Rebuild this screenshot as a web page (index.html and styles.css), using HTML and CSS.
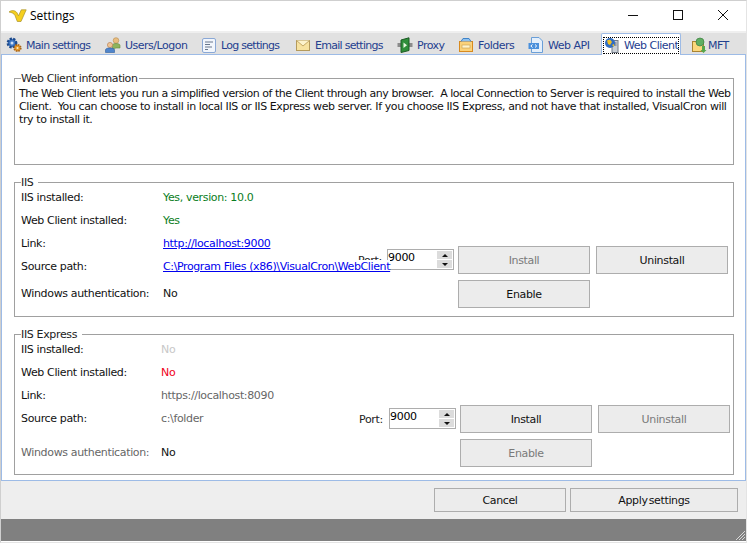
FILE: index.html
```html
<!DOCTYPE html>
<html lang="en">
<head>
<meta charset="utf-8">
<title>Settings</title>
<link rel="stylesheet" href="styles.css">
</head>
<body>
<div class="window">
  <header class="titlebar">
    <svg class="logo" width="18" height="14" viewBox="0 0 18 14"><path d="M0 3C3 .8 6 1.200 8 3.800L9.500 6.800 12.300 .8H17.200L12 12.500H8.300L6 6.500C5 4.500 3 3.500 0 3Z" fill="#f5cf1e" stroke="#a8912c" stroke-width=".7"/></svg>
    <span class="title">Settings</span>
    <div class="winctl">
      <svg width="12" height="12" viewBox="0 0 12 12"><path d="M1 6.500H11" stroke="#111"/></svg>
      <svg width="12" height="12" viewBox="0 0 12 12"><rect x="1.500" y="1.500" width="9" height="9" fill="none" stroke="#111"/></svg>
      <svg width="12" height="12" viewBox="0 0 12 12"><path d="M1 1L11 11M11 1L1 11" stroke="#111" fill="none"/></svg>
    </div>
  </header>

  <nav class="tabs">
    <div class="tab tight"><svg class="ico" viewBox="0 0 16 16"><circle cx="6" cy="6" r="4.200" fill="#3f78c6" stroke="#1d4a8c" stroke-width="2.400" stroke-dasharray="2.200 1.200"/><circle cx="6" cy="6" r="1.500" fill="#cfe0f5"/><circle cx="11.500" cy="11" r="3.200" fill="#e79a2a" stroke="#a8641a" stroke-width="1.800" stroke-dasharray="1.500 1"/><circle cx="11.500" cy="11" r="1" fill="#fde9c0"/></svg><span>Main settings</span></div>
    <div class="tab"><svg class="ico" viewBox="0 0 16 16"><circle cx="11" cy="3.500" r="2.800" fill="#e8bd80" stroke="#b98b4c" stroke-width=".6"/><path d="M7.500 12V8.500C7.500 7 9 6.500 11 6.500S15 7 15 8.500V11H11Z" fill="#8fb45c" stroke="#66883b" stroke-width=".6"/><circle cx="5" cy="8" r="2.600" fill="#eec596" stroke="#b5794a" stroke-width=".6"/><path d="M.5 15.500V13C.5 11.500 2.500 11 5 11S9.500 11.500 9.500 13V15.500Z" fill="#4f85cc" stroke="#2d5c9c" stroke-width=".6"/></svg><span>Users/Logon</span></div>
    <div class="tab tight"><svg class="ico" viewBox="0 0 16 16"><rect x="1.500" y="1.500" width="13" height="14" rx="1.500" fill="#f2f6fc" stroke="#8aa8d6"/><path d="M4 5H12M4 7.500H9M4 10H11M4 12.500H7" stroke="#68778c"/></svg><span>Log settings</span></div>
    <div class="tab tight"><svg class="ico" viewBox="0 0 16 16"><rect x="1.500" y="3.500" width="13" height="10" fill="#f7e2a0" stroke="#b49a5c"/><path d="M1.500 3.500L8 9 14.500 3.500" fill="#fdf3cd" stroke="#c4a866"/></svg><span>Email settings</span></div>
    <div class="tab"><svg class="ico" viewBox="0 0 16 16"><rect x=".5" y="6" width="3.500" height="4" fill="#8b8b8b"/><rect x="12" y="6" width="3.500" height="4" fill="#8b8b8b"/><path d="M4 3L12 .8V13.500L4 15.500Z" fill="#2f8f3a" stroke="#1c5a24"/><path d="M6.500 5.500L10 8.200 6.500 11Z" fill="#e8f8e0"/></svg><span>Proxy</span></div>
    <div class="tab"><svg class="ico" viewBox="0 0 16 16"><rect x="1.500" y="4.500" width="13" height="10" fill="#fbd27a" stroke="#d88a1e"/><path d="M3 4.500L5 1.500H11L13 4.500" fill="#8fc1ee" stroke="#3f83c8"/><rect x="4" y="8" width="8" height="3" fill="#fff4cc" stroke="#c79b4a" stroke-width=".6"/></svg><span>Folders</span></div>
    <div class="tab"><svg class="ico" viewBox="0 0 16 16"><path d="M3.500 .5H11L14.500 4V15.500H3.500Z" fill="#e4effb" stroke="#6a9fd8"/><path d="M.5 6H11V12H.5Z" fill="#4a90dc"/><path d="M4.500 7.500L2.800 9 4.500 10.500M7 7.500L8.700 9 7 10.500" stroke="#fff" fill="none"/></svg><span>Web API</span></div>
    <div class="tab active"><div class="focus"><svg class="ico" viewBox="0 0 16 16"><rect x="8" y="3.500" width="6" height="12" fill="#c8ced6" stroke="#727a85"/><path d="M9.500 6H12.500M9.500 8H12.500" stroke="#5a6470"/><circle cx="6" cy="6" r="5" fill="#2f6cc2"/><path d="M3 3.500L6 2.500 8 5 6 8 4 7ZM8 8L10 7 10 10Z" fill="#f0c024"/></svg><span>Web Client</span></div></div>
    <div class="tab near"><svg class="ico" viewBox="0 0 16 16"><rect x="1.500" y="4.500" width="11" height="10" fill="#fbd77c" stroke="#a98432"/><circle cx="9" cy="5" r="4" fill="#5fae62" stroke="#3d7f42" stroke-width=".7"/><path d="M11 9H14V13H15.500L12.500 16 9.500 13H11Z" fill="#56a64c"/></svg><span>MFT</span></div>
  </nav>

  <main class="pane">
    <fieldset class="group group-info">
      <legend>Web Client information</legend>
      <p class="intro"><span class="line-a">The Web Client lets you run a simplified version of the Client through any browser.&nbsp; A local Connection to Server is required to install the Web</span><span class="line-b">Client.&nbsp; You can choose to install in local IIS or IIS Express web server. If you choose IIS Express, and not have that installed, VisualCron will</span><span class="line-b">try to install it.</span></p>
    </fieldset>

    <fieldset class="group group-iis">
      <legend>IIS</legend>
      <div class="group-body">
        <dl class="facts">
          <dt>IIS installed:</dt><dd class="ok">Yes, version: 10.0</dd>
          <dt>Web Client installed:</dt><dd class="ok">Yes</dd>
          <dt>Link:</dt><dd><a href="#">http://localhost:9000</a></dd>
          <dt>Source path:</dt><dd><a class="over" href="#">C:\Program Files (x86)\VisualCron\WebClient</a></dd>
          <dt class="last">Windows authentication:</dt><dd class="last">No</dd>
        </dl>
        <div class="actions">
          <label class="port">Port:</label>
          <div class="spin"><span>9000</span><div class="arrows"><i class="up"></i><i class="down"></i></div></div>
          <button class="btn" disabled>Install</button>
          <button class="btn">Uninstall</button>
          <button class="btn second">Enable</button>
        </div>
      </div>
    </fieldset>

    <fieldset class="group group-express">
      <legend>IIS Express</legend>
      <div class="group-body">
        <dl class="facts">
          <dt>IIS installed:</dt><dd class="faint">No</dd>
          <dt>Web Client installed:</dt><dd class="bad">No</dd>
          <dt>Link:</dt><dd class="muted">https://localhost:8090</dd>
          <dt>Source path:</dt><dd class="muted">c:\folder</dd>
          <dt class="last muted">Windows authentication:</dt><dd class="last">No</dd>
        </dl>
        <div class="actions">
          <label class="port">Port:</label>
          <div class="spin"><span>9000</span><div class="arrows"><i class="up"></i><i class="down"></i></div></div>
          <button class="btn">Install</button>
          <button class="btn" disabled>Uninstall</button>
          <button class="btn second" disabled>Enable</button>
        </div>
      </div>
    </fieldset>
  </main>

  <footer class="footer">
    <button class="btn cancel">Cancel</button>
    <button class="btn apply">Apply settings</button>
  </footer>
  <div class="status"><svg class="grip" width="12" height="12" viewBox="0 0 12 12"><path d="M11 2L2 11M11 5L5 11M11 8L8 11" stroke="#d8d8d8" stroke-width="1"/></svg></div>
</div>
</body>
</html>
```

FILE: styles.css
```css
* { box-sizing: border-box; }
html, body { margin: 0; padding: 0; background: #fff; }
body {
  width: 747px;
  height: 543px;
  overflow: hidden;
  font-family: "DejaVu Sans", sans-serif;
  font-size: 11px;
  line-height: 13px;
  letter-spacing: -0.35px;
  color: #111;
}
.window {
  width: 747px;
  height: 543px;
  display: flex;
  flex-direction: column;
  border: 1px solid #cfcfcf;
  border-bottom-color: #e4e4e4;
  border-right-color: #e4e4e4;
  position: relative;
}
.titlebar {
  height: 30px;
  flex: none;
  display: flex;
  align-items: center;
  padding: 0 0 1px 8px;
  background: #fff;
}
.logo { flex: none; }
.title {
  margin-left: 3px;
  font-family: "Open Sans", sans-serif;
  font-size: 12px;
  letter-spacing: 0;
  color: #000;
}
.winctl {
  margin-left: auto;
  margin-right: 17px;
  display: flex;
  gap: 33px;
  padding-bottom: 2px;
}
.tabs {
  height: 23px;
  flex: none;
  display: grid;
  grid-template-columns: 99px 96px 94px 102px 61px 70px 73px 90px 44px;
  padding-left: 5px;
  background: linear-gradient(#efefef 0, #efefef 2px, #e1e1e1 2px);
  position: relative;
  z-index: 1;
}
.tab {
  display: flex;
  align-items: center;
  gap: 4px;
  color: #24408f;
  white-space: nowrap;
  padding-top: 5px;
  letter-spacing: -0.5px;
}
.tight { letter-spacing: -0.72px; }
.near { gap: 1px; }
.ico { width: 16px; height: 16px; flex: none; }
.tab.active {
  margin: 2px 10px -1px 0;
  padding: 2px 1px 1px 1px;
  background: #fff;
  border: 1px solid #9dbbe6;
  border-bottom: 0;
  border-radius: 2px 2px 0 0;
}
.focus {
  display: flex;
  align-items: center;
  gap: 4px;
  width: 100%;
  height: 17px;
  border: 1px dotted #000;
}
.pane {
  height: 427px;
  flex: none;
  margin: 0;
  padding: 17px 12px 0 12px;
  background: #fff;
  border: 1px solid #9dbbe6;
  display: flex;
  flex-direction: column;
}
.group {
  margin: 0;
  width: 720px;
  min-width: 0;
  padding: 0 6px;
  border: 1px solid #a0a0a0;
  flex: none;
}
.group legend {
  padding: 0 5px 0 0;
  margin-left: 0;
  line-height: 13px;
  color: #222;
}
.group-info { height: 93px; padding-left: 4px; }
.group-info legend { margin-left: 2px; padding-right: 2px; letter-spacing: -0.45px; }
.group-iis { height: 141px; margin-top: 11px; }
.group-express { height: 147px; margin-top: 11px; }
.intro {
  margin: 2px 0 0;
  white-space: nowrap;
}
.line-a, .line-b { display: block; }
.line-a { letter-spacing: -0.475px; }
.line-b { letter-spacing: -0.4px; }
.group-body {
  display: grid;
  grid-template-columns: 337px auto;
}
.facts {
  margin: 2px 0 0;
  display: grid;
  grid-template-columns: 142px 1fr;
  grid-auto-rows: 13px;
  row-gap: 10px;
  white-space: nowrap;
}
.group-express .facts { grid-template-columns: 140px 1fr; }
.facts dd { margin: 0; }
.facts .last { margin-top: 4px; }
.group-express .facts .last { margin-top: 11px; }
.ok { color: #0a7d22; }
.bad { color: #f00020; }
.faint { color: #c8c8c8; }
.muted { color: #666; }
a { color: #0000ee; text-decoration: underline; }
.over {
  position: relative;
  z-index: 2;
  display: inline-block;
  background: #fff;
  letter-spacing: -0.38px;
}
.actions {
  display: grid;
  grid-template-columns: 29px 67px 136px 138px;
  grid-template-rows: 28px 28px;
  row-gap: 6px;
  margin-top: 57px;
  align-items: start;
}
.group-express .actions { margin-left: 2px; margin-top: 64px; }
.group-express .port { margin-left: -1px; }
.port { padding-top: 8px; color: #222; }
.spin {
  height: 21px;
  margin-top: 3px;
  border: 1px solid #adadad;
  background: #fff;
  display: flex;
  justify-content: space-between;
  line-height: 15px;
  color: #000;
  letter-spacing: -0.3px;
}
.arrows {
  width: 15px;
  margin: 1px 1px 1px 0;
  display: flex;
  flex-direction: column;
  gap: 1px;
  background: #fff;
}
.arrows i {
  flex: 1;
  background: #dcdcdc;
  display: flex;
  align-items: center;
  justify-content: center;
}
.arrows i::before {
  content: "";
  width: 0;
  height: 0;
  border-left: 3px solid transparent;
  border-right: 3px solid transparent;
}
.arrows .up::before { border-bottom: 3px solid #111; }
.arrows .down::before { border-top: 3px solid #111; }
.btn {
  width: 132px;
  height: 28px;
  padding: 0;
  margin-left: 4px;
  font: inherit;
  letter-spacing: inherit;
  color: #111;
  background: #ececec;
  border: 1px solid #adadad;
  border-radius: 0;
}
.btn:disabled { color: #7a7a7a; }
.actions .btn:nth-of-type(2) { margin-left: 6px; }
.actions .second { grid-row: 2; grid-column: 3; }
.footer {
  height: 38px;
  flex: none;
  display: flex;
  justify-content: flex-end;
  align-items: flex-start;
  padding: 7px 8px 0 0;
  background: #eeeeee;
}
.footer .btn { margin: 0; height: 24px; }
.footer .apply { width: 168px; margin-left: 4px; word-spacing: -2px; }
.status {
  height: 22px;
  flex: none;
  background: #808080;
  display: flex;
  justify-content: flex-end;
  align-items: flex-end;
}
.grip { display: block; }
```
